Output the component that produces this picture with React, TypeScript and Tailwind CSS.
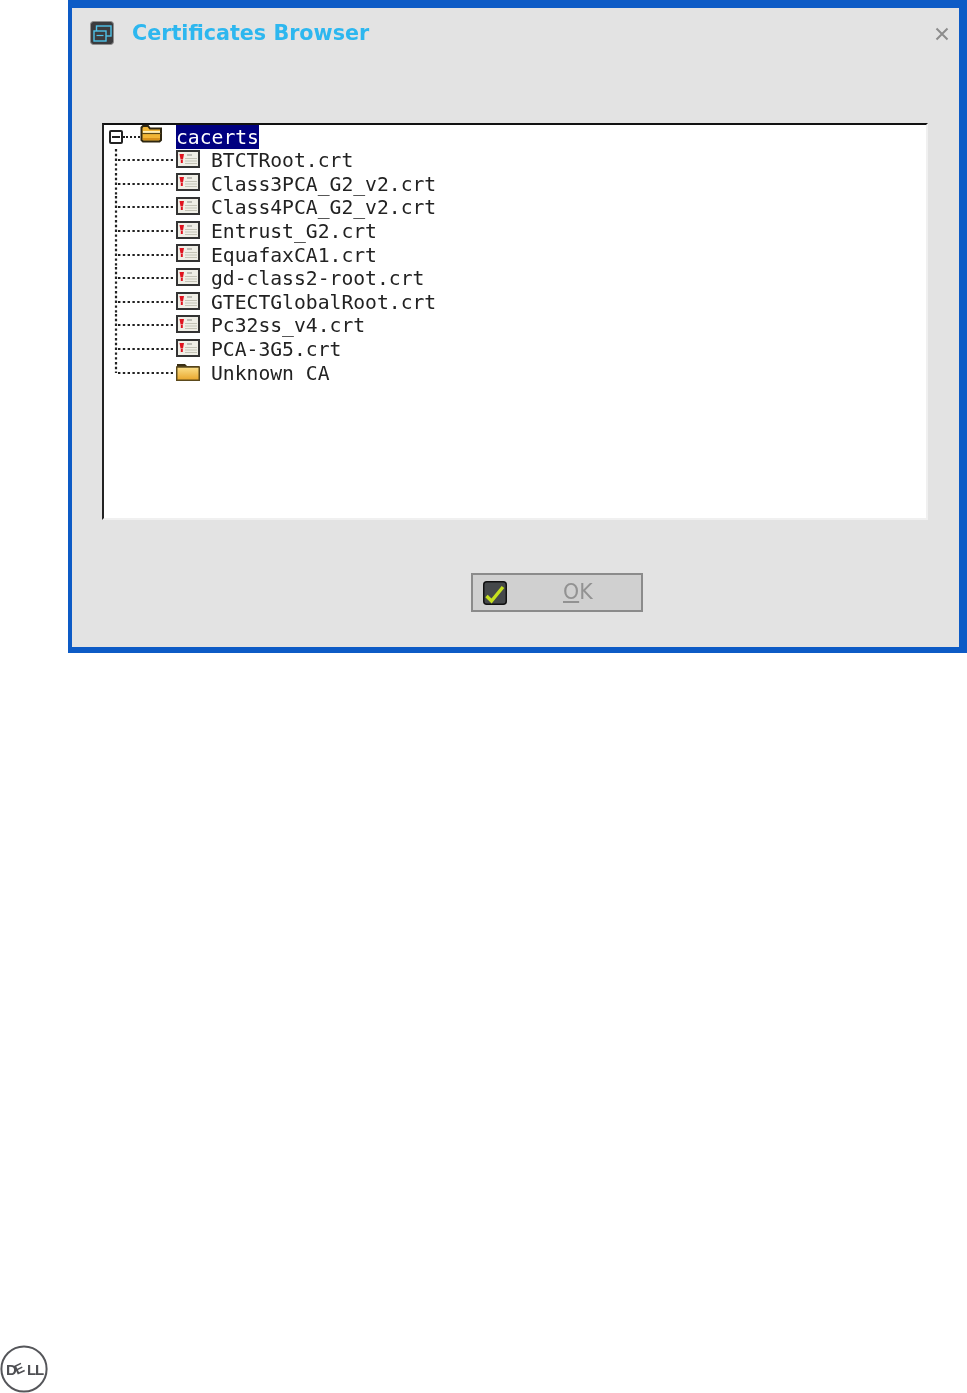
import React from 'react'

const files = [
  { name: 'BTCTRoot.crt' },
  { name: 'Class3PCA_G2_v2.crt' },
  { name: 'Class4PCA_G2_v2.crt' },
  { name: 'Entrust_G2.crt' },
  { name: 'EquafaxCA1.crt' },
  { name: 'gd-class2-root.crt' },
  { name: 'GTECTGlobalRoot.crt' },
  { name: 'Pc32ss_v4.crt' },
  { name: 'PCA-3G5.crt' },
  { name: 'Unknown CA', folder: true },
]

function CertIcon() {
  return (
    <svg width="24" height="18" viewBox="0 0 24 18" className="shrink-0">
      <rect x="1" y="1" width="22" height="16" fill="#efeee6" stroke="#333" strokeWidth="2" />
      <path d="M3.5 4h4.5l-1 5.5h-2.5z" fill="#e0121f" />
      <rect x="4.8" y="10" width="2" height="3" fill="#e0121f" />
      <path d="M11 5h5" stroke="#8d8d86" strokeWidth="1" />
      <path d="M9 8.5h12M9 11h12M9 13.5h12" stroke="#c4c3b6" strokeWidth="1.2" />
    </svg>
  )
}

function ClosedFolder() {
  return (
    <svg width="24" height="18" viewBox="0 0 24 18" className="shrink-0">
      <defs>
        <linearGradient id="closedFolderFill" x1="0" y1="0" x2="0" y2="1">
          <stop offset="0" stopColor="#fbe08a" />
          <stop offset="1" stopColor="#e8a52a" />
        </linearGradient>
      </defs>
      <path d="M1 4V1h8l2 2h12v2z" fill="#3a2f14" />
      <rect x="0.75" y="4" width="22.5" height="13.25" fill="url(#closedFolderFill)" stroke="#5c4a1c" strokeWidth="1.5" />
    </svg>
  )
}

function OpenFolder() {
  return (
    <svg width="23" height="18" viewBox="0 0 23 18" className="shrink-0">
      <path d="M1.5 15V2.5l1.5-1.5h5l2 2.5h11V15l-1.5 1.5h-16.5z" fill="#f2b636" stroke="#2e2610" strokeWidth="2" />
      <path d="M3 6h17v2H3z" fill="#fff0b8" />
      <path d="M2 8.5h19" stroke="#5c4712" strokeWidth="1.2" />
      <path d="M3 13h17v2H3z" fill="#d8911c" />
    </svg>
  )
}

function Connector({ last }: { last: boolean }) {
  return (
    <svg width="72" height="23.65" viewBox="0 0 72 23.65" className="shrink-0">
      <line x1="12" y1="0" x2="12" y2={last ? 11 : 23.65} stroke="#222" strokeWidth="2.2" strokeDasharray="2.4 2.4" />
      <line x1="14" y1="11" x2="69" y2="11" stroke="#222" strokeWidth="2.2" strokeDasharray="2.4 2.4" />
    </svg>
  )
}

function DellLogo() {
  return (
    <svg width="48" height="48" viewBox="0 0 48 48" fontFamily="'Liberation Sans', sans-serif" fontSize="15" fontWeight="700" fill="#4f5054">
      <circle cx="24" cy="24" r="22.6" fill="none" stroke="#55565a" strokeWidth="2" />
      <text x="6" y="29.5">D</text>
      <text x="0" y="0" transform="translate(17 30) rotate(-25)" fontSize="14">E</text>
      <text x="27" y="29.5">L</text>
      <text x="35" y="29.5">L</text>
    </svg>
  )
}

export default function App() {
  return (
    <div className="flex h-[1393px] flex-col justify-between bg-white">
      <div className="ml-[68px] h-[653px] w-[899px] border-t-[8px] border-r-[8px] border-b-[6px] border-l-[4px] border-[#0d5bc6] bg-[#e3e3e3] blur-[0.5px]">
        <div className="flex h-[50px] items-center pr-[10px] pl-[18px]">
          <svg width="24" height="24" viewBox="0 0 24 24" className="shrink-0">
            <rect x="0.5" y="0.5" width="23" height="23" rx="3" fill="#3c3c3e" stroke="#8f8f8f" />
            <rect x="6.5" y="5" width="14.5" height="10" fill="none" stroke="#4fc3ea" strokeWidth="1.4" />
            <rect x="4" y="10" width="12" height="10" fill="#3c3c3e" stroke="#4fc3ea" strokeWidth="1.4" />
            <path d="M6.5 14.5h7" stroke="#4fc3ea" strokeWidth="1.2" />
          </svg>
          <span className="ml-[18px] font-['DejaVu_Sans',sans-serif] text-[20.7px] leading-none font-bold text-[#2db7ef]">
            Certificates Browser
          </span>
          <svg width="14" height="14" viewBox="0 0 14 14" className="mt-[2px] ml-auto">
            <path d="M1.5 1.5l11 11M12.5 1.5l-11 11" stroke="#8c8c8c" strokeWidth="2" />
          </svg>
        </div>

        <div className="mt-[65px] ml-[30px] h-[397px] w-[826px] border-2 border-t-[#111] border-r-[#f0f0f0] border-b-[#f0f0f0] border-l-[#222] bg-white font-['DejaVu_Sans_Mono',monospace] text-[19.7px] text-[#222]">
          <div className="flex h-[24px] items-start">
            <div className="mt-[5px] ml-[5px] flex h-[14px] w-[14px] shrink-0 items-center justify-center rounded-[2px] border-2 border-[#222] bg-white">
              <div className="h-[2px] w-[8px] bg-[#222]" />
            </div>
            <div className="mt-[11px] w-[17px] shrink-0 border-t-2 border-dotted border-[#222]" />
            <div className="shrink-0">
              <OpenFolder />
            </div>
            <span className="ml-[13px] h-[24px] bg-[#000080] leading-[26px] text-white">cacerts</span>
          </div>
          {files.map((file, i) => (
            <div key={file.name} className="flex h-[23.65px] items-center">
              <Connector last={i === files.length - 1} />
              <div className="-mt-[4px] shrink-0">{file.folder ? <ClosedFolder /> : <CertIcon />}</div>
              <span className="ml-[11px] leading-none whitespace-pre">{file.name}</span>
            </div>
          ))}
        </div>

        <div className="mt-[53px] ml-[399px] flex h-[39px] w-[172px] items-center border-2 border-[#8b8b8b] bg-[#d0d0d0] pl-[10px]">
          <svg width="24" height="24" viewBox="0 0 24 24" className="shrink-0">
            <rect x="0.75" y="0.75" width="22.5" height="22.5" rx="3" fill="#45484a" stroke="#111" strokeWidth="1.5" />
            <path d="M3.5 15l5 5L20 6" fill="none" stroke="#c6e01f" strokeWidth="3.4" />
          </svg>
          <span className="ml-[56px] font-['DejaVu_Sans',sans-serif] text-[20.5px] leading-none text-[#929292]">
            <span className="underline decoration-2 underline-offset-2">O</span>K
          </span>
        </div>
      </div>

      <div className="blur-[0.4px]">
        <DellLogo />
      </div>
    </div>
  )
}
